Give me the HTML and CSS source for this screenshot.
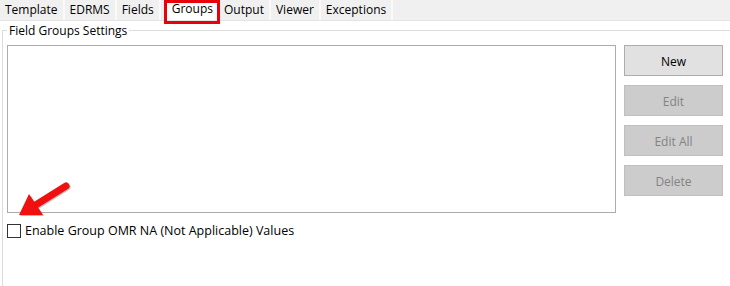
FILE: index.html
```html
<!DOCTYPE html>
<html lang="en">
<head>
    <meta charset="UTF-8">
    <title>Groups</title>
    <link rel="stylesheet" href="styles.css">
</head>
<body>
    <div class="tabs">
        <div class="tab">Template</div>
        <div class="tab">EDRMS</div>
        <div class="tab">Fields</div>
        <div class="tab active">Groups</div>
        <div class="tab">Output</div>
        <div class="tab">Viewer</div>
        <div class="tab">Exceptions</div>
    </div>

    <div class="page">
        <fieldset class="groupbox">
            <legend>Field Groups Settings</legend>
            <div class="group-body">
                <div class="listbox"></div>
                <div class="actions">
                    <button class="btn">New</button>
                    <button class="btn" disabled>Edit</button>
                    <button class="btn" disabled>Edit All</button>
                    <button class="btn" disabled>Delete</button>
                </div>
            </div>
            <label class="check">
                <span class="box"></span>
                Enable Group OMR NA (Not Applicable) Values
            </label>
        </fieldset>

        <!-- annotation arrow -->
        <svg class="arrow" width="80" height="60" viewBox="0 0 80 60">
            <g transform="translate(1,1)" opacity="0.25">
                <line x1="66" y1="16" x2="34" y2="36" stroke="#000" stroke-width="7" stroke-linecap="round"/>
                <polygon points="19,45 30,25 43,45" fill="#000"/>
            </g>
            <line x1="66" y1="16" x2="34" y2="36" stroke="#f01010" stroke-width="7" stroke-linecap="round"/>
            <polygon points="19,45 29,24 43,45" fill="#f01010"/>
        </svg>
    </div>
</body>
</html>
```

FILE: styles.css
```css
body {
    margin: 0;
    background: #fff;
    font-family: "Open Sans", "Noto Sans", sans-serif;
    font-size: 12px;
    color: #000;
}
.tabs {
    display: flex;
    height: 20px;
    background: #f0f0f0;
    border-bottom: 1px solid #e3e3e3;
}
.tab {
    padding: 0 5px;
    line-height: 20px;
    border-right: 2px solid #fafafa;
}
.tab.active {
    position: relative;
    background: #fff;
    line-height: 17px;
    padding: 0 6px 0 7px;
    margin-left: 4px;
    border-right: none;
}
.tab.active::after {
    content: "";
    position: absolute;
    left: -1px;
    top: 0;
    right: -1px;
    height: 24px;
    border: 3px solid #e8000b;
    box-sizing: border-box;
}
.page {
    position: relative;
    padding-left: 2px;
    height: 265px;
    overflow: hidden;
}
.groupbox {
    margin: 0;
    margin-top: 1px;
    padding: 6px 0 0 4px;
    border: 1px solid #dcdcdc;
    border-right: none;
    border-bottom: none;
    height: 300px;
}
.groupbox legend {
    padding: 0 2px;
    margin-left: 0;
    line-height: 17px;
}
.group-body {
    display: flex;
    align-items: flex-start;
}
.listbox {
    width: 607px;
    height: 166px;
    border: 1px solid #acacac;
}
.actions {
    display: flex;
    flex-direction: column;
    gap: 9px;
    margin-left: 8px;
}
.btn {
    width: 99px;
    height: 31px;
    padding: 1px 0 0;
    font-family: inherit;
    font-size: 12px;
    background: #e1e1e1;
    border: 1px solid #adadad;
    color: #000;
}
.btn:disabled {
    background: #cccccc;
    border-color: #bfbfbf;
    color: #838383;
}
.check {
    display: flex;
    align-items: center;
    gap: 4px;
    margin-top: 9px;
    font-size: 12.5px;
}
.box {
    width: 12px;
    height: 12px;
    border: 1px solid #333;
    background: #fff;
}
.arrow {
    position: absolute;
    left: 0;
    top: 149px;
}
```
